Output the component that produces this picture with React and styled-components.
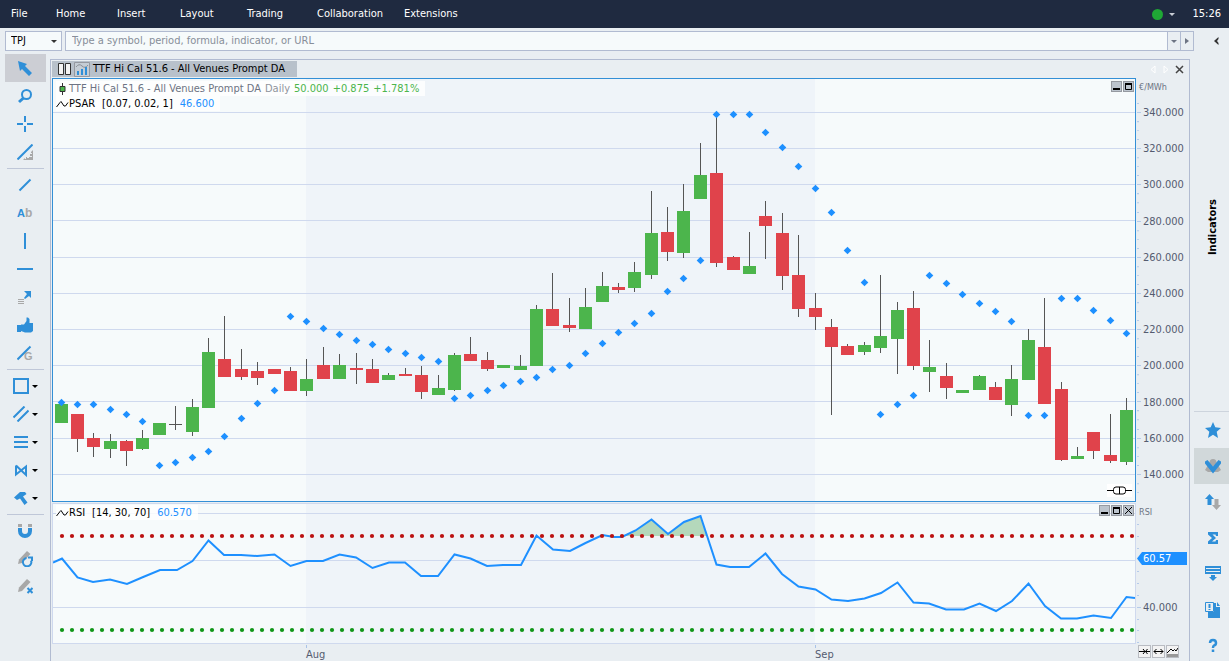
import React from 'react';
import styled, { createGlobalStyle } from 'styled-components';

const GlobalStyle = createGlobalStyle`
  * { box-sizing: border-box; }
  body {
    margin: 0;
    background: #e9eef2;
    color: #000;
    font-family: 'DejaVu Sans Condensed', 'DejaVu Sans', Tahoma, sans-serif;
    font-size: 11px;
    line-height: 14px;
  }
  button, input, select { font: inherit; color: inherit; margin: 0; }
  button { padding: 0; border: 0; background: none; cursor: pointer; }
  svg { display: block; flex: none; }
`;

const Shell = styled.div`
  display: flex;
  flex-direction: column;
  height: 100vh;
  overflow: hidden;
`;

const MenuBar = styled.header`
  display: flex;
  flex: none;
  align-items: center;
  height: 28px;
  padding-right: 8px;
  background: #1f2a40;
  color: #fff;

  time { margin-left: 17px; }
`;

const MenuList = styled.nav`
  display: grid;
  flex: 1;
  grid-template-columns: 45px 61px 63px 67px 70px 87px 1fr;
  padding-left: 11px;
`;

const MenuItem = styled.a`
  justify-self: start;
  color: #fff;
  text-decoration: none;
`;

const StatusButton = styled.button`
  display: flex;
  align-items: center;
  gap: 6px;

  i { width: 11px; height: 11px; border-radius: 50%; background: #1fa835; }
`;

const Caret = styled.span`
  width: 0;
  height: 0;
  border: 3px solid transparent;
  border-top-color: ${p => p.$color || '#000'};
  border-bottom: 0;
`;

const SearchRow = styled.form`
  display: flex;
  flex: none;
  height: 26px;
  padding: 3px 0 3px 5px;
`;

const SelectBox = styled.label`
  display: grid;
  grid-template-columns: 1fr 15px;
  align-items: center;
  width: 57px;
  height: 20px;
  margin-right: 3px;
  border: 1px solid #b1bbd1;
  background: #f6fafb;

  select {
    grid-area: 1 / 1 / 2 / 3;
    width: 100%;
    height: 18px;
    padding: 0 5px;
    border: 0;
    background: none;
    appearance: none;
    outline: none;
  }
  span { grid-area: 1 / 2; justify-self: center; }
`;

const SearchBox = styled.div`
  display: flex;
  flex: 1;
  height: 20px;
  border: 1px solid #b1bbd1;
  background: #f6fafb;

  input {
    flex: 1;
    min-width: 0;
    padding: 0 6px;
    border: 0;
    background: none;
    outline: none;
  }
  input::placeholder { color: #878e99; opacity: 1; }
  button {
    display: grid;
    place-items: center;
    width: 13px;
    border-left: 1px solid #b1bbd1;
    background: #e9eef2;
  }
`;

const CollapseButton = styled.button`
  display: grid;
  place-items: center;
  width: 35px;
  height: 20px;
  padding-left: 9px;
`;

const Body = styled.div`
  display: flex;
  flex: 1;
  min-height: 0;
`;

const Toolbar = styled.aside`
  flex: none;
  width: 50px;
  padding-left: 5px;

  hr {
    height: 1px;
    width: 37px;
    margin: 2px;
    border: 0;
    background: #bfc7d8;
  }
`;

const ToolButton = styled.button`
  display: flex;
  align-items: center;
  justify-content: center;
  gap: 3px;
  width: 41px;
  height: 28px;
  padding-right: ${p => (p.$menu ? 0 : 1)}px;
  background: ${p => (p.$active ? '#ccced4' : 'none')};
`;

const ChartWindow = styled.main`
  display: flex;
  flex: 1;
  flex-direction: column;
  min-width: 0;
  margin-top: 5px;
  border: 1px solid #b1bbd1;
  border-bottom: 0;
  padding-left: 1px;
`;

const TabRow = styled.div`
  display: flex;
  flex: none;
  align-items: center;
  justify-content: space-between;
  height: 18px;
  padding-right: 5px;
`;

const Tab = styled.button`
  display: flex;
  align-items: center;
  gap: 3px;
  height: 16px;
  padding: 0 12px 0 6px;
  background: #b8c1cb;
  white-space: nowrap;
`;

const TabControls = styled.div`
  display: flex;
  gap: 3px;

  button {
    display: grid;
    place-items: center;
    width: 10px;
    height: 10px;
  }
`;

const PaneRow = styled.div`
  display: flex;
  flex: ${p => (p.$height ? 'none' : 1)};
  height: ${p => (p.$height ? `${p.$height}px` : 'auto')};
  min-height: 0;
  margin-bottom: ${p => (p.$height ? 0 : 1)}px;
`;

const Pane = styled.section`
  position: relative;
  flex: 1;
  min-width: 0;
  border: 1px solid ${p => (p.$active ? '#338fd6' : '#cfd9ee')};
  background: #f6fafb;

  > svg { width: 100%; height: 100%; }
`;

const Legend = styled.div`
  position: absolute;
  top: ${p => p.$top}px;
  left: 3px;
`;

const LegendLine = styled.div`
  display: flex;
  align-items: center;
  width: max-content;
  height: 15px;
  padding-right: 6px;
  background: rgba(255, 255, 255, 0.8);
  color: #000;
  white-space: nowrap;
`;

const LegendText = styled.span`
  margin-right: ${p => p.$gap || 0}px;
  color: ${p => p.$color || '#000'};
`;

const WindowButtons = styled.div`
  position: absolute;
  top: ${p => p.$top}px;
  right: 1px;
  display: flex;
  gap: 1px;

  button {
    width: 11px;
    height: 11px;
    border: 1px solid #9599a0;
    background: #bcc4cd;
  }
`;

const LinkBadge = styled.button`
  position: absolute;
  right: 3px;
  bottom: 4px;
  background: #fff;
`;

const Axis = styled.div`
  display: flex;
  flex-direction: column;
  width: 53px;
  color: #545b70;
`;

const AxisUnit = styled.div`
  flex: none;
  height: 17px;
  padding: 2px 0 0 3px;
  color: #6d7483;
  font-size: 9px;
`;

const AxisScale = styled.div`
  display: grid;
  flex: 1;
  grid-template-columns: 5px 1fr;
  grid-auto-rows: 1fr;
  align-items: center;
  column-gap: 2px;
  padding-bottom: 9px;
`;

const AxisTicks = styled.svg`
  width: 5px;
  height: 100%;
`;

const RsiScale = styled.div`
  display: flex;
  gap: 2px;
  height: 124px;
`;

const RsiLabels = styled.div`
  display: flex;
  flex: 1;
  flex-direction: column;
  justify-content: space-between;
  padding: 32px 0 29px;
`;

const PriceTag = styled.div`
  width: 50px;
  height: 13px;
  margin-left: -6px;
  padding-left: 6px;
  background: #1e90ff;
  clip-path: polygon(0 50%, 5px 0, 100% 0, 100% 100%, 5px 100%);
  color: #fff;
  line-height: 13px;
`;

const TimeAxis = styled.footer`
  display: grid;
  flex: none;
  grid-template-columns: 254fr 509fr 320fr 54px;
  height: 17px;
  color: #545b70;
`;

const Month = styled.span`
  padding-top: 4px;
  background: linear-gradient(#a9c3e8, #a9c3e8) 0 1px / 1px 3px no-repeat;
  line-height: 13px;
`;

const ScaleButtons = styled.div`
  display: flex;
  gap: 1px;
  padding: 1px 0 0 3px;

  button {
    width: 13px;
    height: 13px;
    border: 1px solid #b9bcc2;
    background: #f3f3f3;
  }
`;

const Rail = styled.aside`
  display: flex;
  flex: none;
  flex-direction: column;
  width: 39px;
  padding-left: 4px;
`;

const RailTab = styled.button`
  display: flex;
  flex: none;
  align-items: center;
  justify-content: center;
  height: 358px;
  padding: 0 0 11px 2px;
  border-bottom: 1px solid #cdd4dd;

  span {
    writing-mode: vertical-rl;
    transform: rotate(180deg);
    font-weight: bold;
  }
`;

const RailButton = styled.button`
  display: flex;
  flex: none;
  align-items: center;
  justify-content: center;
  height: 36px;
  padding-left: 3px;
  background: ${p => (p.$active ? '#d1d8da' : 'none')};
`;

const BLUE = '#2f8fd8';
const GREY = '#a8a8a8';
const UP = '#4cb54c';
const DOWN = '#e0434b';
const LINE = '#1e90ff';
const GRID = '#cfd9ee';

// x, body top, body bottom, wick top, wick bottom, direction, psar
const candles = [
  [61, 404, 423, 404, 423, 1, 402],
  [77, 414, 439, 414, 452, 0, 404],
  [93, 438, 447, 433, 457, 0, 404],
  [110, 441, 449, 434, 458, 1, 409],
  [126, 441, 451, 440, 466, 0, 414],
  [142, 438, 449, 430, 450, 1, 421],
  [159, 423, 435, 423, 435, 1, 465],
  [175, 424, 425, 406, 430, 2, 462],
  [192, 407, 432, 399, 436, 1, 457],
  [208, 352, 408, 338, 408, 1, 451],
  [224, 359, 377, 316, 377, 0, 436],
  [241, 369, 377, 349, 380, 0, 418],
  [257, 371, 378, 362, 385, 0, 403],
  [274, 369, 374, 369, 374, 0, 390],
  [290, 371, 391, 367, 391, 0, 316],
  [306, 379, 391, 359, 396, 1, 321],
  [323, 365, 379, 347, 379, 0, 328],
  [339, 365, 379, 354, 379, 1, 334],
  [356, 368, 370, 353, 384, 0, 340],
  [372, 369, 383, 359, 383, 0, 344],
  [388, 375, 380, 373, 380, 1, 349],
  [405, 374, 376, 368, 376, 0, 353],
  [421, 375, 392, 366, 399, 0, 357],
  [438, 388, 395, 375, 395, 1, 361],
  [454, 355, 390, 353, 391, 1, 398],
  [470, 354, 361, 337, 361, 0, 395],
  [487, 360, 369, 352, 371, 0, 390],
  [503, 365, 368, 365, 368, 1, 385],
  [520, 366, 370, 355, 370, 1, 381],
  [536, 309, 366, 305, 366, 1, 377],
  [552, 309, 326, 273, 326, 0, 369],
  [569, 325, 328, 298, 332, 0, 365],
  [585, 307, 329, 288, 329, 1, 353],
  [602, 286, 302, 272, 302, 1, 343],
  [618, 287, 290, 283, 293, 0, 332],
  [634, 272, 288, 262, 292, 1, 323],
  [651, 233, 275, 191, 279, 1, 313],
  [667, 232, 252, 207, 261, 0, 291],
  [683, 211, 253, 184, 258, 1, 278],
  [700, 175, 199, 143, 199, 1, 260],
  [716, 173, 263, 115, 267, 0, 114],
  [733, 257, 270, 256, 270, 0, 114],
  [749, 266, 274, 232, 274, 1, 114],
  [765, 216, 226, 201, 259, 0, 132],
  [782, 233, 276, 213, 290, 0, 147],
  [798, 275, 309, 235, 317, 0, 166],
  [815, 308, 317, 293, 330, 0, 188],
  [831, 327, 347, 319, 415, 0, 212],
  [847, 346, 355, 344, 355, 0, 250],
  [864, 345, 352, 342, 355, 1, 282],
  [880, 336, 348, 275, 353, 1, 414],
  [897, 310, 339, 302, 374, 1, 404],
  [913, 308, 366, 291, 370, 0, 395],
  [929, 367, 372, 340, 392, 1, 275],
  [946, 376, 388, 363, 399, 0, 283],
  [962, 390, 393, 390, 393, 1, 294],
  [979, 376, 390, 375, 390, 1, 303],
  [995, 387, 400, 382, 400, 0, 311],
  [1011, 379, 405, 365, 416, 1, 321],
  [1028, 340, 380, 329, 380, 1, 415],
  [1044, 347, 404, 298, 404, 0, 415],
  [1061, 389, 460, 382, 461, 0, 298],
  [1077, 456, 459, 447, 459, 1, 298],
  [1093, 432, 451, 432, 459, 0, 310],
  [1110, 455, 461, 414, 463, 0, 320],
  [1126, 410, 462, 398, 465, 1, 333],
];

const priceGrid = [112, 148, 184, 220, 257, 293, 329, 365, 401, 438, 474];
const priceLabels = [340, 320, 300, 280, 260, 240, 220, 200, 180, 160, 140];
const candleColors = [DOWN, UP, '#555'];

const rsiPoints = '53,562.5 62,558.5 77.5,577.5 93,582 110,579.5 127,584 142,577.5 160,570 177,570 192.5,561 208.5,540.5 '
  + '224,555 241,555 257,556 274.5,554.5 290.5,566 306.5,561 323,561 339.5,554.5 356,557.5 372.5,568 389,562.5 405,562.5 '
  + '421,576 438,576 454.5,554.5 470.5,558.5 487,566 503,565 521,565 536.5,535.5 553,549.5 570,551 585.5,543 602.5,535 '
  + '614,537 622,537 635.5,530.5 651.5,519.5 668,534 684,522 700.5,516 716.5,564.5 730,567 749,567 765.5,553.5 782,574 '
  + '798.5,586.5 815.5,589.5 831.5,599.5 848,601 864.5,598.5 881,593 897.5,582.5 913.5,602.5 929,603.5 946,609.5 964,609.5 '
  + '979.5,603.5 996,611 1012,601 1028.5,583.5 1045,606 1061,618.5 1077,618.5 1093.5,615.5 1111,618 1126.5,597 1135,598';

const PriceChart = () => (
  <svg viewBox='53 79 1082 422' preserveAspectRatio='none' aria-hidden='true'>
    <rect x='306' y='79' width='509' height='422' fill='#eff4f9' />
    {priceGrid.map(y => <rect key={y} x='53' y={y} width='1082' height='1' fill={GRID} />)}
    {candles.map(([x, top, bottom, high, low, dir]) => (
      <g key={x}>
        <rect x={x} y={high} width='1' height={low - high} fill='#555' />
        <rect x={x - 6} y={top} width='13' height={bottom - top} fill={candleColors[dir]} />
      </g>
    ))}
    {candles.map(([x, , , , , , sar]) => (
      <path key={x} d={`M${x + 0.5} ${sar - 3.3}l3.8 3.8-3.8 3.8-3.8-3.8z`} fill={LINE} />
    ))}
  </svg>
);

const dots = Array.from({ length: 108 }, (_, i) => 62 + i * 10);

const RsiChart = () => (
  <svg viewBox='53 504 1082 139' preserveAspectRatio='none' aria-hidden='true'>
    <rect x='306' y='504' width='509' height='139' fill='#eff4f9' />
    {[513, 560, 607].map(y => <rect key={y} x='53' y={y} width='1082' height='1' fill={GRID} />)}
    <path d='M622 536l13.5-5.5 16-11L668 534l16-12 16.5-6 6.5 20z' fill='#b4d8bb' />
    <polyline points={rsiPoints} fill='none' stroke={LINE} strokeWidth='2' />
    {dots.map(x => (
      <g key={x}>
        <circle cx={x} cy='536' r='2.1' fill='#bb1111' />
        <circle cx={x} cy='630' r='2.1' fill='#109618' />
      </g>
    ))}
  </svg>
);

const Glyph = styled.text`
  fill: ${p => p.$color};
  font: bold ${p => p.$size}px 'Liberation Sans', sans-serif;
`;

const tools = [
  ['Pointer', <path d='M1 1l9 3-2 2 7 7-3 3-7-7-2 2z' fill={BLUE} />],
  ['Zoom', <g fill='none' stroke={BLUE}><circle cx='9.5' cy='6.5' r='4.5' strokeWidth='2' /><path d='M6.5 10L2 14' strokeWidth='3' /></g>],
  ['Crosshair', <path d='M8 0v6M8 10v6M0 8h6M10 8h6' stroke={BLUE} strokeWidth='2' />],
  ['Measure', <g><path d='M6 16h10V6l-2 2v1h1v1h-2v2h2v1h-3v1h-2v-1H9v2H8v-1z' fill={GREY} /><path d='M.5 15.5l15-15' stroke={BLUE} strokeWidth='2' /></g>],
  null,
  ['Trend line', <path d='M2.5 13.5l11-11' stroke={BLUE} strokeWidth='2' />],
  ['Text', <g><Glyph x='0' y='12' $color={BLUE} $size={11}>A</Glyph><Glyph x='8' y='12' $color={GREY} $size={12}>b</Glyph></g>],
  ['Vertical line', <path d='M8 0v16' stroke={BLUE} strokeWidth='2' />],
  ['Horizontal line', <path d='M0 8h16' stroke={BLUE} strokeWidth='2' />],
  ['Arrow note', <g><path d='M7 2h7v7l-2-2-4 3-1-1 3-4z' fill={BLUE} /><path d='M1 10.5h6M1 12.5h6M1 14.5h6' stroke={GREY} /></g>],
  ['Thumb up', <path d='M0 8h4v7H0zM4 7.5h3L9.500 4V.5H11l1.5 1.500v4H16V14l-2 1.500H8L4 14z' fill={BLUE} />],
  ['Gann line', <g><path d='M.5 14.5l13-13' stroke={BLUE} strokeWidth='2' /><Glyph x='7' y='15' $color={GREY} $size={11}>G</Glyph></g>],
  null,
  ['Shapes', <path d='M1 1h14v14H1z' fill='none' stroke={BLUE} strokeWidth='2' />, true],
  ['Channel', <path d='M.5 11.5l11-11M4.5 15.5l11-11' stroke={BLUE} strokeWidth='2' />, true],
  ['Levels', <path d='M1 3h14M1 8h14M1 13h14' stroke={BLUE} strokeWidth='2' />, true],
  ['Patterns', <path d='M3 3.5v9l10-8v8.500L3 3.500' fill='none' stroke={BLUE} strokeWidth='2' />, true],
  ['Build tools', <path d='M1 7.5L7 2h5l1.5 2L10 6.500l4.500 6L11.500 15 7 8.500 4 10z' fill={BLUE} />, true],
  null,
  ['Magnet', <g><path d='M1 1h4v3H1zM11 1h4v3h-4z' fill={GREY} /><path d='M3 5v3a5 5 0 0 0 10 0V5' fill='none' stroke={BLUE} strokeWidth='4' /></g>],
  ['Redraw', <g><path d='M1 13l1-4.500L10 0l3.500 3L5 12z' fill={GREY} /><path d='M11 6.500h5M15 6v4M9.500 7a4.200 4.200 0 1 0 4.500 2.500' fill='none' stroke={BLUE} strokeWidth='2' /></g>],
  ['Erase drawing', <g><path d='M1 13l1-4.500L10 0l3.500 3L5 12z' fill={GREY} /><path d='M10.500 9l5 5M15.500 9l-5 5' stroke={BLUE} strokeWidth='2' /></g>],
];

const railIcons = [
  ['Favourites', <path d='M8 0l2.300 5.300 5.700.6-4.300 3.800L13 16l-5-3.200L3 16l1.300-6.300L0 5.900l5.700-.6z' fill={BLUE} />],
  ['Signals', <g><circle cx='8' cy='4.500' r='3.500' fill={GREY} /><path d='M0 12l3-5 5 4 5-4 3 5-3 2H3z' fill={GREY} /><path d='M0 3.500L2.500 2 8 8.500 13.500 2 16 3.500v2L8 15.500l-8-10z' fill={BLUE} /></g>],
  ['Sort', <g><path d='M4.500 0L9 5H6.500v6h-4V5H0z' fill={BLUE} /><path d='M9.500 5h4v6H16l-4.500 5L7 11h2.500z' fill={GREY} /></g>],
  ['Formulas', <path d='M3 2h10v4h-2l-.5-1.500H7.500L11 8l-4 3.500h3.500L11 10h2v4H3v-2.500L7 8 3 4.500z' fill={BLUE} />],
  ['Send to list', <g><path d='M0 0h16v8H0z' fill={BLUE} /><path d='M1 2.500h14M1 5.500h14' stroke='#e9eef2' /><path d='M6 9h4v2h2l-4 4-4-4h2z' fill={BLUE} /></g>],
  ['Notes', <g><path d='M9 1h2v4h4v11H3V10h6z' fill={BLUE} /><path d='M12 0l3 4h-3z' fill={BLUE} /><path d='M.5.5h8v9h-8z' fill='#e9eef2' stroke={BLUE} /><path d='M4.500 2v4M4.500 7v1' stroke={BLUE} strokeWidth='2' /></g>],
  ['Help', <path d='M5 5q0-3 3-3t3 3q0 2-2 2.500-1 .5-1 2.500M8 11.500v2.500' fill='none' stroke={BLUE} strokeWidth='2.500' />],
];

const MinIcon = () => <svg width='9' height='9'><path d='M1 7h7' stroke='#000' strokeWidth='2' /></svg>;
const MaxIcon = () => <svg width='9' height='9'><path d='M1 2h7' stroke='#000' strokeWidth='2' /><path d='M1.500 1.500h6v6h-6z' fill='none' stroke='#000' /></svg>;
const CloseIcon = () => <svg width='9' height='9'><path d='M1 1l7 7M8 1l-7 7' stroke='#000' /></svg>;
const WaveIcon = () => (
  <svg width='13' height='10' fill='none' stroke='#000'><path d='M.5 8L4 3.500l1-1 3 4.500h1.500L12 3.500' /></svg>
);

const menu = ['File', 'Home', 'Insert', 'Layout', 'Trading', 'Collaboration', 'Extensions'];

export default function App() {
  return (
    <Shell>
      <GlobalStyle />
      <MenuBar>
        <MenuList>
          {menu.map(m => <MenuItem key={m} href='#'>{m}</MenuItem>)}
        </MenuList>
        <StatusButton aria-label='Connection status'><i /><Caret $color='#c9cdd6' /></StatusButton>
        <time>15:26</time>
      </MenuBar>

      <SearchRow onSubmit={e => e.preventDefault()}>
        <SelectBox>
          <select aria-label='Template'><option>TPJ</option></select>
          <Caret $color='#333' />
        </SelectBox>
        <SearchBox>
          <input aria-label='Search' placeholder='Type a symbol, period, formula, indicator, or URL' />
          <button type='button' aria-label='History'><Caret $color='#6d7483' /></button>
          <button type='button' aria-label='Go'>
            <svg width='4' height='6'><path d='M0 0l4 3-4 3z' fill='#6d7483' /></svg>
          </button>
        </SearchBox>
        <CollapseButton type='button' aria-label='Collapse panel'>
          <svg width='6' height='8'><path d='M5.500 0L1 4l4.500 4V6L4 4l1.500-2z' fill='#333' /></svg>
        </CollapseButton>
      </SearchRow>

      <Body>
        <Toolbar>
          {tools.map((t, i) => (t ? (
            <ToolButton key={t[0]} aria-label={t[0]} $active={i === 0} $menu={t[2]}>
              <svg width='16' height='16'>{t[1]}</svg>
              {t[2] ? <Caret /> : false}
            </ToolButton>
          ) : <hr key={i} />))}
        </Toolbar>

        <ChartWindow>
          <TabRow>
            <Tab>
              <svg width='13' height='12' fill='#f4f4f4' stroke='#333'><path d='M.5.5h5v11h-5zM7.500.5h5v11h-5z' /></svg>
              <svg width='16' height='15'>
                <path d='M.5.5h15v14H.5z' fill='#c5cdd5' stroke='#9599a0' />
                <path d='M2 5q3-4 6-1t6-1' fill='none' stroke='#8b8f95' />
                <path d='M3 9h2v4H3zM7 7h2v6H7zM11 5h2v8h-2z' fill={BLUE} />
              </svg>
              TTF Hi Cal 51.6 - All Venues Prompt DA
            </Tab>
            <TabControls>
              <button aria-label='Previous tab'><svg width='6' height='9'><path d='M5 1v7L1 4.500z' fill='none' stroke='#fff' /></svg></button>
              <button aria-label='Next tab'><svg width='6' height='9'><path d='M1 1v7l4-3.500z' fill='none' stroke='#fff' /></svg></button>
              <button aria-label='Close tab'><svg width='9' height='9'><path d='M1 1l7 7M8 1L1 8' stroke='#444' strokeWidth='1.500' /></svg></button>
            </TabControls>
          </TabRow>

          <PaneRow>
            <Pane $active>
              <PriceChart />
              <Legend $top={2}>
                <LegendLine>
                  <svg width='13' height='12'><path d='M6.500 0v12' stroke='#333' /><path d='M4 3.500h5v5H4z' fill={UP} stroke='#333' /></svg>
                  <LegendText $color='#6d7483' $gap={4}>TTF Hi Cal 51.6 - All Venues Prompt DA</LegendText>
                  <LegendText $color='#8f949c' $gap={4}>Daily</LegendText>
                  <LegendText $color={UP} $gap={4}>50.000</LegendText>
                  <LegendText $color={UP} $gap={4}>+0.875</LegendText>
                  <LegendText $color={UP}>+1.781%</LegendText>
                </LegendLine>
                <LegendLine>
                  <WaveIcon />
                  <LegendText $gap={7}>PSAR</LegendText>
                  <LegendText $gap={7}>[0.07, 0.02, 1]</LegendText>
                  <LegendText $color={LINE}>46.600</LegendText>
                </LegendLine>
              </Legend>
              <WindowButtons $top={2}>
                <button aria-label='Minimise'><MinIcon /></button>
                <button aria-label='Maximise'><MaxIcon /></button>
              </WindowButtons>
              <LinkBadge aria-label='Link charts'>
                <svg width='25' height='13' fill='none' stroke='#000'>
                  <path d='M0 6.500h7M19 6.500h6M12.500 3v7' /><rect x='6.500' y='3' width='12' height='7' rx='2.500' />
                </svg>
              </LinkBadge>
            </Pane>
            <Axis>
              <AxisUnit>€/MWh</AxisUnit>
              <AxisScale>
                {priceLabels.map(p => (
                  <React.Fragment key={p}>
                    <AxisTicks viewBox='0 0 5 36' preserveAspectRatio='none'>
                      <path d='M1 8.500h2M1 26.500h2M1 35.500h2M1 17.500h4' stroke='#b5cbea' />
                    </AxisTicks>
                    <span>{p}.000</span>
                  </React.Fragment>
                ))}
              </AxisScale>
            </Axis>
          </PaneRow>

          <PaneRow $height={141}>
            <Pane>
              <RsiChart />
              <Legend $top={1}>
                <LegendLine>
                  <WaveIcon />
                  <LegendText $gap={7}>RSI</LegendText>
                  <LegendText $gap={7}>[14, 30, 70]</LegendText>
                  <LegendText $color={LINE}>60.570</LegendText>
                </LegendLine>
              </Legend>
              <WindowButtons $top={1}>
                <button aria-label='Minimise'><MinIcon /></button>
                <button aria-label='Maximise'><MaxIcon /></button>
                <button aria-label='Close'><CloseIcon /></button>
              </WindowButtons>
            </Pane>
            <Axis>
              <AxisUnit>RSI</AxisUnit>
              <RsiScale>
                <svg width='5' height='124'>
                  <path d='M1 4.500h2M1 16.500h2M1 28.500h2M1 51.500h2M1 63.500h2M1 75.500h2M1 87.500h4M1 99.500h2M1 110.500h2M1 122.500h2' stroke='#b5cbea' />
                </svg>
                <RsiLabels>
                  <PriceTag>60.57</PriceTag>
                  <span>40.000</span>
                </RsiLabels>
              </RsiScale>
            </Axis>
          </PaneRow>

          <TimeAxis>
            <span />
            <Month>Aug</Month>
            <Month>Sep</Month>
            <ScaleButtons>
              <button aria-label='Compress'><svg width='11' height='11'><path d='M0 5.500h11M4 3l2 2.500L4 8M8.500 3L6.500 5.500l2 2.500' fill='none' stroke='#000' /></svg></button>
              <button aria-label='Expand'><svg width='11' height='11'><path d='M1 5.500h9M3.500 3L1 5.500 3.500 8M7.500 3L10 5.500 7.500 8' fill='none' stroke='#000' /></svg></button>
              <button aria-label='Fit scale'><svg width='11' height='11'><path d='M0 8h11v3H0z' fill='#999' /><path d='M0 7l4-4 2 2 1.500-1.500L9 5l2-3' fill='none' stroke='#000' /></svg></button>
            </ScaleButtons>
          </TimeAxis>
        </ChartWindow>

        <Rail>
          <RailTab><span>Indicators</span></RailTab>
          {railIcons.map(([name, icon]) => (
            <RailButton key={name} aria-label={name} $active={name === 'Signals'}>
              <svg width='16' height='16'>{icon}</svg>
            </RailButton>
          ))}
        </Rail>
      </Body>
    </Shell>
  );
}
